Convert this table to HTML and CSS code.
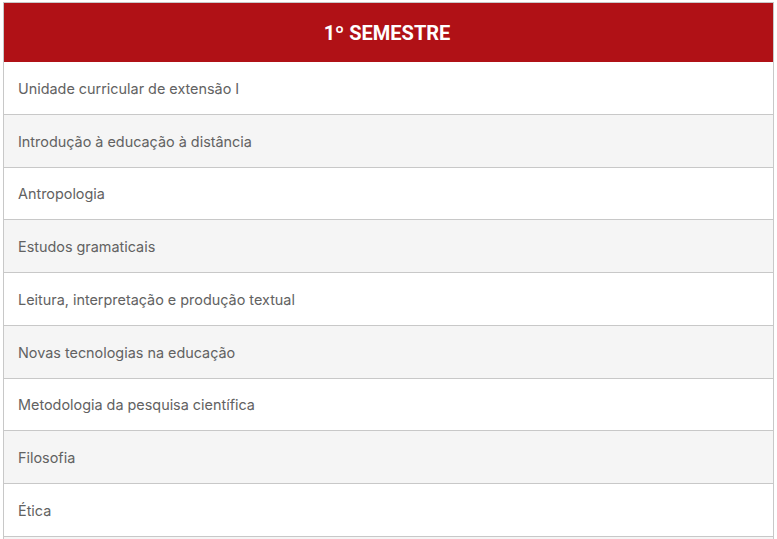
FILE: index.html
```html
<!DOCTYPE html>
<html lang="pt">
<head>
<meta charset="utf-8">
<link rel="stylesheet" href="styles.css">
</head>
<body>
<div class="table">
  <div class="head">1º SEMESTRE</div>
  <div class="row">Unidade curricular de extensão I</div>
  <div class="row alt">Introdução à educação à distância</div>
  <div class="row">Antropologia</div>
  <div class="row alt">Estudos gramaticais</div>
  <div class="row">Leitura, interpretação e produção textual</div>
  <div class="row alt">Novas tecnologias na educação</div>
  <div class="row">Metodologia da pesquisa científica</div>
  <div class="row alt">Filosofia</div>
  <div class="row">Ética</div>
  <div class="row alt"></div>
</div>
</body>
</html>
```
FILE: styles.css
```css
html, body {
  margin: 0;
  padding: 0;
  background: #fff;
}
body {
  padding: 2px 3px 0 3px;
  overflow: hidden;
}
.table {
  border: 1px solid #c8c8c8;
  border-bottom: none;
  font-family: Inter, "Noto Sans", sans-serif;
}
.head {
  background: #b01116;
  color: #fff;
  font-family: Roboto, "Liberation Sans", sans-serif;
  font-weight: 700;
  font-size: 20px;
  height: 59px;
  display: flex;
  align-items: center;
  justify-content: center;
  padding-right: 3px;
}
.row {
  box-sizing: border-box;
  height: 52.75px;
  border-top: 1px solid #c8c8c8;
  display: flex;
  align-items: center;
  padding-left: 14px;
  padding-top: 1px;
  font-size: 14.4px;
  color: #626262;
  background: #fff;
}
.head + .row {
  border-top: none;
  height: 51.75px;
}
.row.alt {
  background: #f5f5f5;
}
```
